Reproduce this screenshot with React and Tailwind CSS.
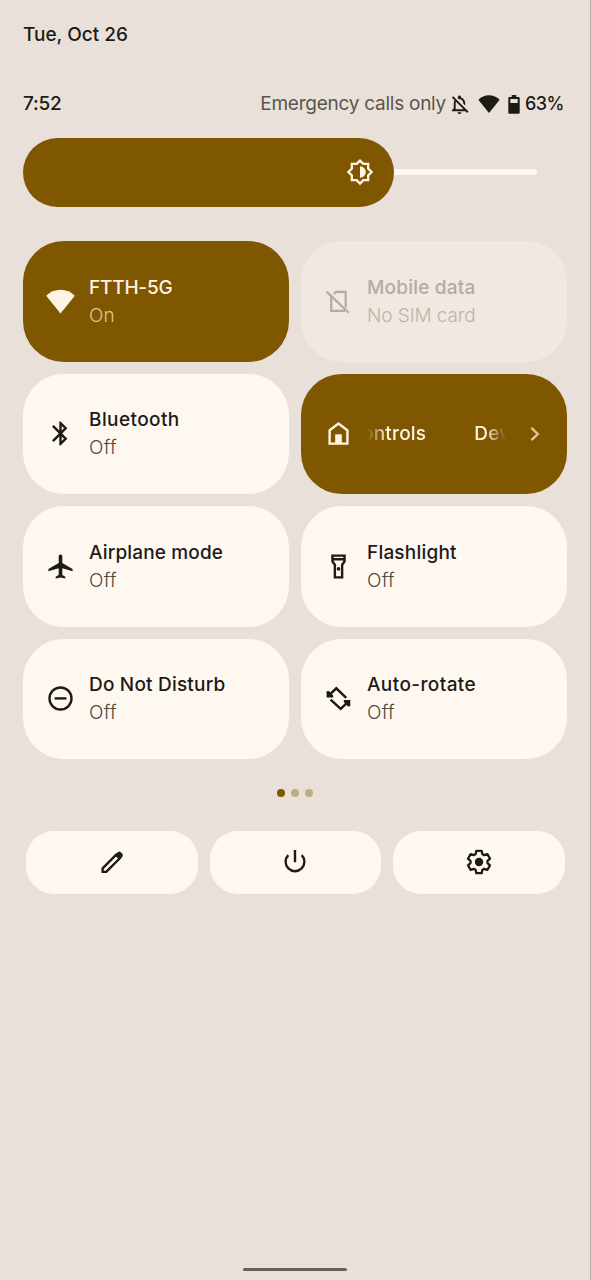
import React from "react";
import { MdBluetooth, MdOutlineFlashlightOn, MdOutlineNotificationsOff } from "react-icons/md";

function Svg({ w = 29, h = w, box = `0 0 ${w} ${h}`, children, className = "" }) {
  return (
    <svg width={w} height={h} viewBox={box} className={`shrink-0 ${className}`} fill="none" stroke="none">
      {children}
    </svg>
  );
}

const WifiFan = ({ w, h }) => (
  <Svg w={w} h={h} box="0 0 30 25">
    <path d="M15 25 0.2 6.6C4.2 2.4 9.2 .3 15 .3s10.800 2.100 14.800 6.300Z" fill="currentColor" />
  </Svg>
);

const NoSim = () => (
  <Svg>
    <path d="M7.200 9.500V23.900H21M9.800 7 11.800 4.900H21.700V20.500M2.600 4.600 24.600 25.800" stroke="currentColor" strokeWidth="2.200" />
  </Svg>
);

const Home = () => (
  <Svg>
    <path d="M5.600 24.600V11.400L14.500 4.600 23.400 11.400V24.600Z" stroke="currentColor" strokeWidth="2.400" />
    <path d="M11.200 15.300h6.600v9.500h-6.600Z" fill="currentColor" />
  </Svg>
);

const Airplane = () => (
  <Svg box="0 0 24 24">
    <path
      fill="currentColor"
      d="M22 16v-2l-8.500-5V3.500c0-.83-.67-1.500-1.500-1.500s-1.500.67-1.500 1.500V9L2 14v2l8.500-2.500V19L8 20.500V22l4-1 4 1v-1.500L13.500 19v-5.500L22 16z"
    />
  </Svg>
);

const Dnd = () => (
  <Svg>
    <circle cx="14.500" cy="14.500" r="11" stroke="currentColor" strokeWidth="2.400" />
    <path d="M8.600 14.400h11.800" stroke="currentColor" strokeWidth="2.400" />
  </Svg>
);

const Rotate = () => (
  <Svg>
    <path d="M5.200 11.200 12.300 4.300 22.200 13.800M6.600 15.600 16.700 24.900 23.800 18.200" stroke="currentColor" strokeWidth="2.500" />
    <path d="M2.600 7.300 5 7 9.200 11.500V13.500H2.600ZM26.300 22.200 24 22.500 19.800 18V16H26.300Z" fill="currentColor" />
  </Svg>
);

const Brightness = () => (
  <Svg w={28} box="0 0 24 24">
    <path
      d="M12 2.200 14.900 5H19v4.100L21.900 12 19 14.900V19h-4.100L12 21.900 9.100 19H5v-4.100L2.100 12 5 9.100V5h4.100Z"
      stroke="currentColor"
      strokeWidth="2"
    />
    <path d="M12 7a5 5 0 0 1 0 10Z" fill="currentColor" />
  </Svg>
);

const Battery = () => (
  <Svg w={12} h={19}>
    <path
      fill="currentColor"
      fillRule="evenodd"
      d="M3.700 0h4.600v2H10.500q1.200 0 1.200 1.200V17.600q0 1.200-1.200 1.200H1.500Q.3 18.800.3 17.600V3.200Q.3 2 1.500 2H3.700ZM2.300 4V8H9.700V4Z"
    />
  </Svg>
);

const Pencil = () => (
  <Svg w={24}>
    <path d="M2.600 21.900V18.300L16.500 4.400 20.100 8 6.200 21.900Z" stroke="currentColor" strokeWidth="2.400" strokeLinejoin="round" />
    <path d="m14.800 5.200 3-3q1.700-1.300 3.200.200l1.200 1.200q1.400 1.500 .200 3.100L19.300 9.800Z" fill="currentColor" />
  </Svg>
);

const Power = () => (
  <Svg w={26}>
    <path d="M13 .9V13.300M6.300 6.200A9.400 9.400 0 1 0 19.700 6.200" stroke="currentColor" strokeWidth="2.400" />
  </Svg>
);

const gearPoints = [0, 60, 120, 180, 240, 300]
  .flatMap((deg) => {
    const a = (deg * Math.PI) / 180;
    return [[-3.300, -7.900], [-2.700, -11.200], [2.700, -11.200], [3.300, -7.900]].map(([x, y]) =>
      [13 + x * Math.cos(a) - y * Math.sin(a), 13 + x * Math.sin(a) + y * Math.cos(a)].map((n) => n.toFixed(2)).join(",")
    );
  })
  .join(" ");

const Gear = () => (
  <Svg w={26}>
    <polygon points={gearPoints} stroke="currentColor" strokeWidth="2.300" strokeLinejoin="round" />
    <circle cx="13" cy="13" r="4.200" fill="currentColor" />
  </Svg>
);

const tones = {
  on: "bg-[#7f5700] text-[#fff3e4]",
  off: "bg-[#fff8f1] text-[#1e1b16]",
  disabled: "bg-[#f0e8e1] text-[#b3aba4]",
};
const subTones = {
  on: "text-[#e0c595]",
  off: "text-[#4d463d]",
  disabled: "text-[#bcb4ad]",
};

function Tile({ tone = "off", icon, title, sub, track = "tracking-[0.2px]", subTrack = "tracking-[0.3px]" }) {
  return (
    <div className={`flex items-center rounded-[41px] pl-[23px] ${tones[tone]}`}>
      <div className="flex w-[29px] shrink-0 justify-center">{icon}</div>
      <div className="ml-[14px] whitespace-nowrap pt-px text-[19px] leading-[28px]">
        <div className={`font-medium ${track}`}>{title}</div>
        <div className={`font-light ${subTones[tone]} ${subTrack}`}>{sub}</div>
      </div>
    </div>
  );
}

function ControlsTile() {
  return (
    <div className={`flex items-center rounded-[41px] pl-[23px] ${tones.on}`}>
      <Home />
      <div className="ml-[14px] flex w-[140px] overflow-hidden whitespace-nowrap text-[19px] font-medium leading-[28px] tracking-[0.2px] [mask-image:linear-gradient(to_right,transparent,#000_20px,#000_118px,transparent_139px)]">
        <span className="ml-[-5px]">ontrols</span>
        <span className="ml-[48px]">Devi</span>
      </div>
      <Svg w={14} h={18} className="ml-[21px] text-[#e0c595]">
        <path d="M3.500 2.800 9.700 9 3.500 15.200" stroke="currentColor" strokeWidth="2.400" />
      </Svg>
    </div>
  );
}

export default function App() {
  return (
    <div className="flex h-[1280px] w-[591px] flex-col overflow-hidden border-r border-[#b5ada6] bg-[#e9e1d9] font-['Inter','Noto_Sans',sans-serif] text-[#1e1b16]">
      <header className="px-[23px] pt-[21px] text-[19px] font-medium leading-[28px]">
        <span>Tue, Oct 26</span>
      </header>

      <div className="mt-[41px] flex h-[28px] items-center pl-[23px] pr-[26px] text-[19px] font-medium leading-[28px]">
        <span className="tracking-[-0.2px]">7:52</span>
        <span className="ml-auto font-normal tracking-[-0.250px] text-[#5c554d]">Emergency calls only</span>
        <MdOutlineNotificationsOff size={23} className="ml-[2px] shrink-0" />
        <div className="ml-[7px]"><WifiFan w={22} h={18} /></div>
        <div className="ml-[8px]"><Battery /></div>
        <span className="ml-[5px] w-[39px] text-[18px] tracking-[-0.5px]">63%</span>
      </div>

      <div className="ml-[23px] mt-[20px] flex h-[69px] items-center">
        <div className="flex h-full w-[371px] items-center justify-end rounded-[34.500px] bg-[#7f5700] pb-px pr-[20px] text-[#fff3e4]">
          <Brightness />
        </div>
        <div className="mb-px h-[6px] w-[143px] rounded-r-full bg-[#fff8f1]" />
      </div>

      <main className="ml-[23px] mt-[34.200px] grid h-[518px] w-[544px] grid-cols-2 grid-rows-4 gap-x-[12px] gap-y-[11.800px]">
        <Tile tone="on" icon={<WifiFan w={29} h={25} />} title="FTTH-5G" sub="On" track="tracking-[-0.2px]" subTrack="tracking-[0px]" />
        <Tile tone="disabled" icon={<NoSim />} title="Mobile data" sub="No SIM card" subTrack="tracking-[-0.1px]" />
        <Tile icon={<MdBluetooth size={29} />} title="Bluetooth" sub="Off" track="tracking-[0.4px]" />
        <ControlsTile />
        <Tile icon={<Airplane />} title="Airplane mode" sub="Off" track="tracking-[0.150px]" />
        <Tile icon={<MdOutlineFlashlightOn size={29} />} title="Flashlight" sub="Off" />
        <Tile icon={<Dnd />} title="Do Not Disturb" sub="Off" />
        <Tile icon={<Rotate />} title="Auto-rotate" sub="Off" track="tracking-[0.4px]" />
      </main>

      <div className="mt-[30px] flex justify-center gap-[5.600px]">
        <i className="size-[8px] rounded-full bg-[#7f5700]" />
        <i className="size-[8px] rounded-full bg-[#bfab86]" />
        <i className="size-[8px] rounded-full bg-[#bfab86]" />
      </div>

      <footer className="ml-[26px] mt-[33.800px] grid h-[63px] w-[539px] grid-cols-3 gap-[12px]">
        {[<Pencil key="edit" />, <Power key="power" />, <Gear key="settings" />].map((icon) => (
          <button key={icon.key} className="flex items-center justify-center rounded-[28px] bg-[#fff8f1]">
            {icon}
          </button>
        ))}
      </footer>

      <div className="mx-auto mb-[9px] mt-auto h-[3px] w-[104px] rounded-full bg-[#6a6058]" />
    </div>
  );
}
